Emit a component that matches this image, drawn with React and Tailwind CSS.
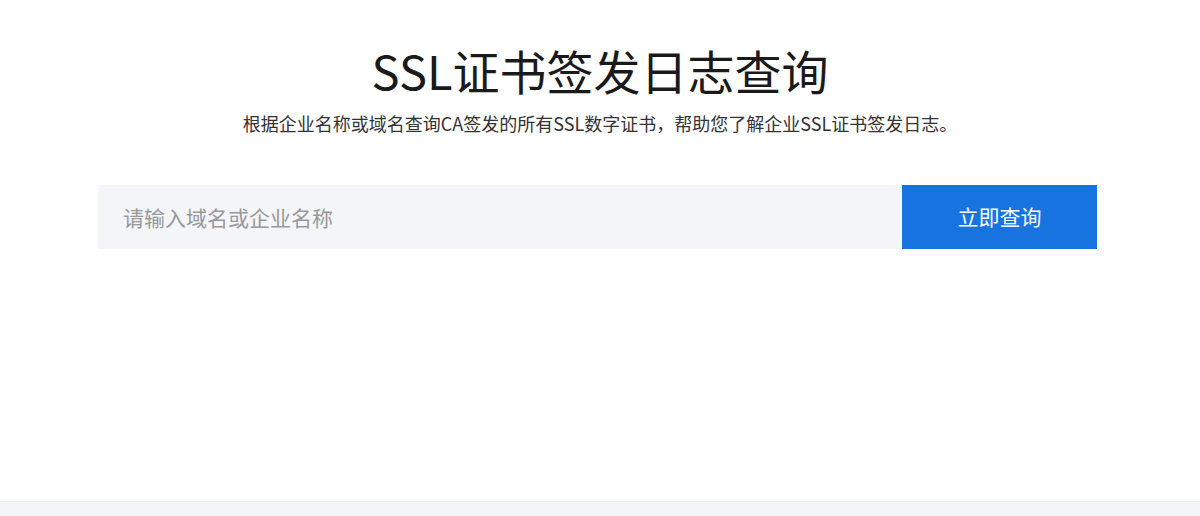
import React from 'react';

// SSL证书签发日志查询 - 搜索页
const SearchBar = () => (
  <form className="ml-[98px] mt-[49px] flex h-16 w-[999px]" onSubmit={(e) => e.preventDefault()}>
    <input
      type="text"
      placeholder="请输入域名或企业名称"
      className="h-full flex-1 bg-[#f3f5f9] pl-[25px] text-[21px] text-[#333] outline-none placeholder:text-[#999]"
    />
    <button
      type="submit"
      className="h-full w-[195px] bg-[#1773e0] text-[21px] text-white"
    >
      立即查询
    </button>
  </form>
);

export default function App() {
  return (
    <div className="flex h-[516px] flex-col bg-white font-['Noto_Sans_CJK_SC','Noto_Sans',sans-serif]">
      <main className="flex-1 pt-[37px]">
        <h1 className="text-center text-[47px] leading-[66px] text-[#1a1a1a]">SSL证书签发日志查询</h1>
        <p className="mt-[7px] text-center text-[18px] leading-[26px] text-[#333]">
          根据企业名称或域名查询CA签发的所有SSL数字证书，帮助您了解企业SSL证书签发日志。
        </p>
        <SearchBar />
      </main>
      <footer className="h-[15px] border-t border-[#eef0f4] bg-[#f4f5f9]" />
    </div>
  );
}
